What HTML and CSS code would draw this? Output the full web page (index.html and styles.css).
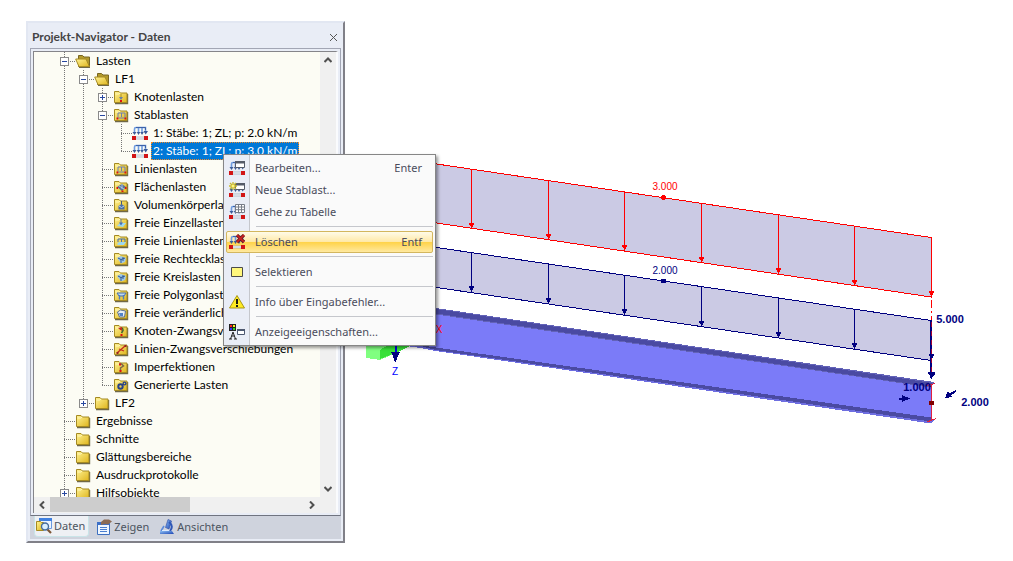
FILE: index.html
```html
<!DOCTYPE html>
<html lang="de">
<head>
    <meta charset="utf-8">
    <title>Projekt-Navigator</title>
    <link rel="stylesheet" href="styles.css">
</head>
<body>
    <svg class="sprite" aria-hidden="true">
        <defs>
            <linearGradient id="gold" x1="0" y1="0" x2="1" y2="1">
                <stop offset="0" stop-color="#fff394"/>
                <stop offset="1" stop-color="#dfb51d"/>
            </linearGradient>
            <linearGradient id="steel" x1="0" y1="0" x2="1" y2="1">
                <stop offset="0" stop-color="#8ec0f4"/>
                <stop offset="1" stop-color="#1c45b4"/>
            </linearGradient>
        </defs>
        <symbol id="folder" viewBox="0 0 16 16">
            <path d="M2 14.5h12.5V5" fill="none" stroke="#6f6848" stroke-width="1.4"/>
            <path d="M1.5 2.5h4.5l1.5 1.5h6.500v9.500H1.500z" fill="url(#gold)" stroke="#a58a22"/>
            <path d="M2.500 5h3.500l1-1" fill="none" stroke="#fff7b8"/>
        </symbol>
        <symbol id="folder-open" viewBox="0 0 16 16">
            <path d="M3.500 2.500h4l1.500 1.500h5.500v9.500h-11z" fill="#b39a2c" stroke="#786622"/>
            <path d="M.7 6h10.300l3.500 7.700H4z" fill="url(#gold)" stroke="#a58a22"/>
            <path d="M4 14.500h11" stroke="#6f6848"/>
        </symbol>
        <symbol id="load" viewBox="0 0 16 16">
            <path d="M2.500 8V4Q2.500 2.500 4 2.500h9.500V8M6.500 8V3M10 8V3" fill="none" stroke="#6f9ce0" stroke-width="1.600"/>
            <path d="M4 2.500h9.500V5" fill="none" stroke="#3d62a8"/>
            <path d="M.5 7h4L2.500 10zM4.800 7h3.500L6.500 10zM8.300 7h3.500L10 10zM11.500 6H16l-2.300 3.500z" fill="#3c5c98"/>
            <path d="M3 12h10v2H3z" fill="#f6f8fb" stroke="#8f9bb0" stroke-width=".6"/>
            <path d="M0 11h4v4H0zM12 11h4v4h-4z" fill="#d21515"/>
        </symbol>
        <symbol id="g-node" viewBox="0 0 16 16">
            <use href="#folder"/>
            <path d="M8 5v5" stroke="#a88c20"/><path d="M6 8h4l-2 3z" fill="#697fa8"/><path d="M7 11h2v2H7z" fill="#d11"/>
        </symbol>
        <symbol id="g-member" viewBox="0 0 16 16">
            <use href="#folder"/>
            <path d="M5 10V6h7v4M8.500 6v4M4 11h9" fill="none" stroke="#6d7fb0"/>
            <path d="M3.500 10.500h1.800v2H3.500zM11.500 10.500h1.800v2h-1.800z" fill="#d11"/>
        </symbol>
        <symbol id="g-area" viewBox="0 0 16 16">
            <use href="#folder"/>
            <path d="M4 8l5-3 4 3-4 4z" fill="#5a7196"/><path d="M6 7l5 3M9 5v5" stroke="#a6c6e8"/>
            <path d="M3.500 8h1.500v2H3.500zM8.500 11.500h2v1.500h-2zM12 8h1.500v2H12z" fill="#d11"/>
        </symbol>
        <symbol id="g-solid" viewBox="0 0 16 16">
            <use href="#folder"/>
            <path d="M8.500 4v5" stroke="#42597c"/><path d="M5.500 9l3-2 3 2v3.500h-6z" fill="#4c6ea5"/><path d="M6 9l2.500 1.500L11 9" fill="none" stroke="#b8d3f2"/>
        </symbol>
        <symbol id="g-point" viewBox="0 0 16 16">
            <use href="#folder"/>
            <path d="M4 11l3-3h6l-3 4z" fill="#9dd8f0"/><path d="M8 4v4" stroke="#5b77a8"/><path d="M6 7.500h4l-2 3z" fill="#456fb5"/>
        </symbol>
        <symbol id="g-line" viewBox="0 0 16 16">
            <use href="#folder"/>
            <path d="M4 11l2-2h7l-2 3H5z" fill="#9dd8f0"/><path d="M5 9V6h7v3M8.500 6v3" fill="none" stroke="#476eae"/>
        </symbol>
        <symbol id="g-rect" viewBox="0 0 16 16">
            <use href="#folder"/>
            <path d="M4 7l4-2 5 2-1 4-4 1.500z" fill="#9dc9e8"/><path d="M5 7l3 1.500L12 7M8 8v4M10 6v4" fill="none" stroke="#345891"/>
        </symbol>
        <symbol id="g-poly" viewBox="0 0 16 16">
            <use href="#folder"/>
            <path d="M4 6h9l-2 3H6z" fill="#bcd8ed" stroke="#476eae"/><path d="M6.500 8v4.500M10.500 8v4.500" stroke="#4f7dc0" stroke-width="1.400"/>
        </symbol>
        <symbol id="g-var" viewBox="0 0 16 16">
            <use href="#folder"/>
            <path d="M4.500 7l3-2 5 1-1 6h-5z" fill="#e8eef2" stroke="#5a7196"/><path d="M6 8h4v3H7z" fill="#5183c8"/>
        </symbol>
        <symbol id="g-forced" viewBox="0 0 16 16">
            <use href="#folder"/>
            <path d="M7 6.500q3-3 3 1L8.500 10" fill="none" stroke="#3e672f" stroke-width="1.500"/><path d="M5 5l4-1v4z" fill="#c9291d"/><path d="M7.500 11h2v2h-2z" fill="#d11"/>
        </symbol>
        <symbol id="g-forcedline" viewBox="0 0 16 16">
            <use href="#folder"/>
            <path d="M4 12l8-7M6 8l5 2" fill="none" stroke="#c42b1c" stroke-width="1.300"/><path d="M3.500 11h2v2h-2zM11.500 4h2v2h-2z" fill="#922"/>
        </symbol>
        <symbol id="g-imp" viewBox="0 0 16 16">
            <use href="#folder"/>
            <path d="M7.500 12V9l3-2-2-2H6" fill="none" stroke="#7b674a" stroke-width="1.500"/><path d="M6 4.500h2v2H6zM6.500 11h2v2h-2z" fill="#d11"/>
        </symbol>
        <symbol id="g-gen" viewBox="0 0 16 16">
            <use href="#folder"/>
            <circle cx="7.500" cy="9.500" r="2.200" fill="none" stroke="#294387" stroke-width="2"/><circle cx="11.500" cy="6.500" r="1.400" fill="none" stroke="#294387" stroke-width="1.400"/>
        </symbol>
        <symbol id="m-edit" viewBox="0 0 16 16">
            <use href="#load"/>
            <path d="M6.500 1.500h9v6h-9z" fill="#fff" stroke="#555b68"/><path d="M6 1h10v2.500H6z" fill="#555b68"/>
        </symbol>
        <symbol id="m-new" viewBox="0 0 16 16">
            <use href="#m-edit"/>
            <path d="M4 0v8M0 4h8M1 1l6 6M7 1L1 7" stroke="#c9b92c" stroke-width="1.300"/><circle cx="4" cy="4" r="1.500" fill="#fff584"/>
        </symbol>
        <symbol id="m-table" viewBox="0 0 16 16">
            <use href="#load"/>
            <path d="M6.500.5h9v8h-9z" fill="#fff"/><path d="M6.500.5h9v8h-9zM6.500 3h9M6.500 5.700h9M9.500.5v8M12.500.5v8" fill="none" stroke="#777d88"/>
        </symbol>
        <symbol id="m-delete" viewBox="0 0 16 16">
            <use href="#load"/>
            <path d="M8 1l7 7M15 1L8 8" stroke="#70191c" stroke-width="3.200"/><path d="M8 1l7 7M15 1L8 8" stroke="#cf2424" stroke-width="1.600"/>
        </symbol>
        <symbol id="m-select" viewBox="0 0 16 16">
            <path d="M2.500 3.500h11v9h-11z" fill="#fff77c" stroke="#4b4b4b"/>
        </symbol>
        <symbol id="m-warn" viewBox="0 0 16 16">
            <path d="M8 1.500L15.500 14H.5z" fill="#ffec21" stroke="#a99618" stroke-linejoin="round"/>
            <path d="M8 5v5M8 11v2" stroke="#111" stroke-width="1.900"/>
        </symbol>
        <symbol id="m-display" viewBox="0 0 16 16">
            <path d="M0 0h7v7H0z" fill="#222"/><path d="M1 1h2v2H1z" fill="#f22"/><path d="M4 1h2v2H4z" fill="#fe2"/><path d="M1 4h2v2H1z" fill="#33f"/><path d="M4 4h2v2H4z" fill="#2d2"/>
            <path d="M0 15h3M5 15h3M1.500 15L4 8l2.500 7M2.500 12h3" fill="none" stroke="#222"/>
            <path d="M8.500 5.500h7v5h-7z" fill="#fff" stroke="#4d5870"/><path d="M8 5h8v2H8z" fill="#4d5870"/>
        </symbol>
        <symbol id="t-data" viewBox="0 0 16 16">
            <path d="M3.500.5h12v10h-12z" fill="#edf5ff" stroke="#6a9be0"/><path d="M3 0h13v3H3z" fill="#3f7fe0"/>
            <path d="M.5 3.500h4l1 1h2v8h-7z" fill="url(#gold)" stroke="#a58a22"/>
            <path d="M11 11l4 4" stroke="#7c5535" stroke-width="2.200"/><circle cx="9" cy="8.500" r="3.500" fill="#d9efff" stroke="#456c9d" stroke-width="1.400"/>
        </symbol>
        <symbol id="t-show" viewBox="0 0 16 16">
            <path d="M1.500 3.500h12v12h-12z" fill="#f0f7ff" stroke="#3d6fc0"/><path d="M1 3h13v3H1z" fill="#3d70c8"/>
            <path d="M4 8.500h7M4 10.500h7M4 12.500h7" stroke="#4b7fd1"/><path d="M5 3l3-2.500h5l3 2-4 3-3-.5-4 1z" fill="#8b6b55"/>
        </symbol>
        <symbol id="t-views" viewBox="0 0 16 16">
            <path d="M9 .5l3.500 1.500L10 10 6.500 8.500z" fill="url(#steel)" stroke="#2848a4" stroke-width=".6"/>
            <path d="M10 3q5 4 1 9" fill="none" stroke="#2e58b8" stroke-width="2"/>
            <path d="M5 7L2 12" stroke="#5c8bdc" stroke-width="1.600"/>
            <path d="M1 12h12l2 3H1z" fill="url(#steel)"/><path d="M3 11.500h7" stroke="#dcebff"/>
        </symbol>
    </svg>

    <div class="workspace">
        <aside class="navigator">
            <header class="titlebar">
                <h1>Projekt-Navigator - Daten</h1>
                <button class="close" aria-label="Schließen">
                    <svg viewBox="0 0 9 9"><path d="M1 1l7 7M8 1L1 8"/></svg>
                </button>
            </header>

            <div class="frame">
                <div class="pane">
                    <ul class="tree">
                        <li>
                            <div class="row"><button class="toggle open" aria-label="Lasten"></button><svg class="icon"><use href="#folder-open"/></svg><span>Lasten</span></div>
                            <ul>
                                <li>
                                    <div class="row"><button class="toggle open" aria-label="LF1"></button><svg class="icon"><use href="#folder-open"/></svg><span>LF1</span></div>
                                    <ul>
                                        <li><div class="row"><button class="toggle" aria-label="Knotenlasten"></button><svg class="icon"><use href="#g-node"/></svg><span>Knotenlasten</span></div></li>
                                        <li>
                                            <div class="row"><button class="toggle open" aria-label="Stablasten"></button><svg class="icon"><use href="#g-member"/></svg><span>Stablasten</span></div>
                                            <ul>
                                                <li><div class="row"><svg class="icon"><use href="#load"/></svg><span>1: Stäbe: 1; ZL; p: 2.0 kN/m</span></div></li>
                                                <li><div class="row"><svg class="icon"><use href="#load"/></svg><span class="selected">2: Stäbe: 1; ZL; p: 3.0 kN/m</span></div></li>
                                            </ul>
                                        </li>
                                        <li><div class="row"><svg class="icon"><use href="#g-member"/></svg><span>Linienlasten</span></div></li>
                                        <li><div class="row"><svg class="icon"><use href="#g-area"/></svg><span>Flächenlasten</span></div></li>
                                        <li><div class="row"><svg class="icon"><use href="#g-solid"/></svg><span>Volumenkörperlasten</span></div></li>
                                        <li><div class="row"><svg class="icon"><use href="#g-point"/></svg><span>Freie Einzellasten</span></div></li>
                                        <li><div class="row"><svg class="icon"><use href="#g-line"/></svg><span>Freie Linienlasten</span></div></li>
                                        <li><div class="row"><svg class="icon"><use href="#g-rect"/></svg><span>Freie Rechtecklasten</span></div></li>
                                        <li><div class="row"><svg class="icon"><use href="#g-rect"/></svg><span>Freie Kreislasten</span></div></li>
                                        <li><div class="row"><svg class="icon"><use href="#g-poly"/></svg><span>Freie Polygonlasten</span></div></li>
                                        <li><div class="row"><svg class="icon"><use href="#g-var"/></svg><span>Freie veränderliche Lasten</span></div></li>
                                        <li><div class="row"><svg class="icon"><use href="#g-forced"/></svg><span>Knoten-Zwangsverschiebungen</span></div></li>
                                        <li><div class="row"><svg class="icon"><use href="#g-forcedline"/></svg><span>Linien-Zwangsverschiebungen</span></div></li>
                                        <li><div class="row"><svg class="icon"><use href="#g-imp"/></svg><span>Imperfektionen</span></div></li>
                                        <li><div class="row"><svg class="icon"><use href="#g-gen"/></svg><span>Generierte Lasten</span></div></li>
                                    </ul>
                                </li>
                                <li><div class="row"><button class="toggle" aria-label="LF2"></button><svg class="icon"><use href="#folder"/></svg><span>LF2</span></div></li>
                            </ul>
                        </li>
                        <li><div class="row"><svg class="icon"><use href="#folder"/></svg><span>Ergebnisse</span></div></li>
                        <li><div class="row"><svg class="icon"><use href="#folder"/></svg><span>Schnitte</span></div></li>
                        <li><div class="row"><svg class="icon"><use href="#folder"/></svg><span>Glättungsbereiche</span></div></li>
                        <li><div class="row"><svg class="icon"><use href="#folder"/></svg><span>Ausdruckprotokolle</span></div></li>
                        <li><div class="row"><button class="toggle" aria-label="Hilfsobjekte"></button><svg class="icon"><use href="#folder"/></svg><span>Hilfsobjekte</span></div></li>
                    </ul>
                    <div class="scroll-v">
                        <button aria-label="Nach oben"><svg viewBox="0 0 8 8"><path d="M.5 6L4 2.500 7.500 6"/></svg></button>
                        <button aria-label="Nach unten"><svg viewBox="0 0 8 8"><path d="M.5 2L4 5.500 7.500 2"/></svg></button>
                    </div>
                    <div class="scroll-h">
                        <button aria-label="Nach links"><svg viewBox="0 0 8 8"><path d="M6 .5L2.500 4 6 7.500"/></svg></button>
                        <div class="track"><div class="thumb"></div></div>
                        <button aria-label="Nach rechts"><svg viewBox="0 0 8 8"><path d="M2 .5L5.500 4 2 7.500"/></svg></button>
                    </div>
                </div>
            </div>

            <nav class="tabs">
                <button class="tab active"><svg class="icon"><use href="#t-data"/></svg>Daten</button>
                <button class="tab"><svg class="icon"><use href="#t-show"/></svg>Zeigen</button>
                <button class="tab"><svg class="icon"><use href="#t-views"/></svg>Ansichten</button>
            </nav>
        </aside>

        <svg class="model" viewBox="345 0 668 561">
            <defs>
                <path id="head" d="M-2.500-6h5v2h-1L.5 0h-1l-1-4h-1z"/>
            </defs>

            <!-- support -->
            <path d="M366 340v18l14 2 16-7v-13z" fill="#80ff80"/>
            <path d="M380 350l10-6h24l-14 7-20 8z" fill="#38e038"/>
            <path d="M395.500 340v14" stroke="#0000e0" stroke-width="2"/>
            <path d="M391 352h9l-2 4-2 6h-1l-2-6z" fill="#000080"/>

            <!-- beam -->
            <path d="M400 304l531 78v40L400 345z" fill="#7b7bf8"/>
            <path d="M400 303l36 5 498 74-4 5.500-494-73-36-5z" fill="#6262b8"/>
            <path d="M400 304l36 5 496 74v4L436 313.500l-36-5z" fill="#4a4aa2"/>
            <path d="M415 344.500l21 3 495 71 4 1-4 4-495-72.500-21-4z" fill="#6e6ee0"/>
            <path d="M415 344.500l21 3 495 70v4l-495-71.500z" fill="#4a4aa2"/>

            <!-- load 3.0 -->
            <path d="M430 163l501 74v60l-501-75z" fill="#cbcae4"/>
            <g class="red">
                <path d="M430 163l501 74.500V297l-501-75M471.500 169v60M548.500 180v60M624.500 192v60M701.500 203v60M778.500 214v60M854.500 226v60"/>
                <circle cx="663.500" cy="197.500" r="2"/>
                <use href="#head" x="471.500" y="228.500"/><use href="#head" x="548.500" y="239.500"/><use href="#head" x="624.500" y="250.500"/><use href="#head" x="701.500" y="262.500"/><use href="#head" x="778.500" y="274"/><use href="#head" x="854.500" y="285.500"/><use href="#head" x="931.500" y="297"/>
            </g>

            <!-- load 2.0 -->
            <path d="M430 246l501 74v40l-501-74z" fill="#cbcae4"/>
            <g class="navy">
                <path d="M430 246.500l501 74v40l-501-74M471.500 252v40M548.500 264v40M624.500 275v40M701.500 286v40M778.500 298v40M854.500 309v40"/>
                <path d="M661.500 279.500h4v3h-4z"/>
                <use href="#head" x="471.500" y="292"/><use href="#head" x="548.500" y="304"/><use href="#head" x="624.500" y="315"/><use href="#head" x="701.500" y="326.500"/><use href="#head" x="778.500" y="338"/><use href="#head" x="854.500" y="349"/><use href="#head" x="931.500" y="360"/>
            </g>

            <!-- nodal loads and member end -->
            <path d="M931 320v56" stroke="#000080" stroke-width="2"/>
            <path d="M931.500 300v20" stroke="#f00" stroke-dasharray="8 3 2 3"/>
            <path d="M931.500 322v52" stroke="#a00030" stroke-dasharray="5 4"/>
            <path d="M928 372h7v2l-2 2-1 3h-1l-1-3-2-2z" fill="#000080"/>
            <path d="M931.500 384v36M926 385.500l9-2M927 422l9-3.500M929 388l4-4" fill="none" stroke="#e02040"/>
            <path d="M929 401h5v4h-5z" fill="#800000"/>
            <path d="M899 398.500h5" stroke="#000080" stroke-width="2"/>
            <path d="M902 395l8 3.500-8 3.500z" fill="#000080"/>
            <path d="M956 391l-6 3.500" fill="none" stroke="#000080" stroke-width="2"/>
            <path d="M948 391l4 6-7 1z" fill="#000080"/>

            <g class="values">
                <text x="665" y="190" fill="#f00">3.000</text>
                <text x="665" y="274" fill="#000080">2.000</text>
                <text x="395" y="375" fill="#00f">Z</text>
                <text x="439" y="333" fill="#f00">X</text>
            </g>
            <g class="forces">
                <text x="950" y="323">5.000</text>
                <text x="917" y="391">1.000</text>
                <text x="975" y="406">2.000</text>
            </g>
        </svg>

        <ul class="context-menu">
            <li><button><svg class="icon"><use href="#m-edit"/></svg>Bearbeiten...<kbd>Enter</kbd></button></li>
            <li><button><svg class="icon"><use href="#m-new"/></svg>Neue Stablast...</button></li>
            <li><button><svg class="icon"><use href="#m-table"/></svg>Gehe zu Tabelle</button></li>
            <li class="separator"></li>
            <li><button class="hover"><svg class="icon"><use href="#m-delete"/></svg>Löschen<kbd>Entf</kbd></button></li>
            <li class="separator"></li>
            <li><button><svg class="icon"><use href="#m-select"/></svg>Selektieren</button></li>
            <li class="separator"></li>
            <li><button><svg class="icon"><use href="#m-warn"/></svg>Info über Eingabefehler...</button></li>
            <li class="separator"></li>
            <li><button><svg class="icon"><use href="#m-display"/></svg>Anzeigeeigenschaften...</button></li>
        </ul>
    </div>
</body>
</html>
```

FILE: styles.css
```css
* {
    box-sizing: border-box;
}

body {
    margin: 0;
    background: #fff;
    font: 11px/18px "Noto Sans", "Open Sans", sans-serif;
    color: #000;
}

ul {
    list-style: none;
    margin: 0;
    padding: 0;
}

button {
    margin: 0;
    padding: 0;
    border: 0;
    background: none;
    font: inherit;
    color: inherit;
}

.sprite {
    position: absolute;
    width: 0;
    height: 0;
}

.icon {
    flex: none;
    width: 16px;
    height: 16px;
}

.workspace {
    position: relative;
    display: flex;
    align-items: flex-start;
    min-height: 100vh;
    padding-left: 26px;
}

/* Navigator window */
.navigator {
    display: flex;
    flex-direction: column;
    flex: none;
    width: 319px;
    height: calc(100vh - 39px);
    margin: 21px 0 18px;
    padding: 0 2px 2px;
    background: #e9edf6;
    border: 2px solid #808088;
    border-top-color: #e2e7f2;
    border-left-color: #e2e7f2;
}

.titlebar {
    display: flex;
    align-items: center;
    justify-content: space-between;
    height: 25px;
    padding: 3px 3px 0 2px;
}

.titlebar h1 {
    margin: 0;
    font: bold 12px/18px Lato, "Open Sans", sans-serif;
    color: #444;
}

.close {
    display: flex;
}

.close svg {
    width: 9px;
    height: 9px;
    fill: none;
    stroke: #555;
}

.frame {
    flex: 1;
    min-height: 0;
    padding: 2px;
    border: 1px solid #a2a6b4;
    border-bottom-color: #707480;
}

.pane {
    display: grid;
    grid-template: minmax(0, 1fr) 16px / minmax(0, 1fr) 16px;
    height: 100%;
    background: #f0f0f0;
    border-top: 1px solid #85858a;
    border-left: 1px solid #85858a;
    border-right: 2px solid #fafbfd;
}

/* Tree */
.tree {
    padding-left: 26px;
    overflow: hidden;
    white-space: nowrap;
    background: #fcfcf4;
    font: 12px/18px Lato, "Open Sans", sans-serif;
}

.tree ul {
    padding-left: 19px;
}

.tree li {
    background: repeating-linear-gradient(#777 0 1px, transparent 1px 2px) 4px 0 / 1px 100% no-repeat;
}

.tree li:last-child {
    background-size: 1px 9px;
}

.row {
    display: flex;
    align-items: center;
    height: 18px;
    background: repeating-linear-gradient(90deg, #777 0 1px, transparent 1px 2px) 4px 9px / 12px 1px no-repeat;
}

.row .icon {
    margin: 0 4px 0 15px;
}

.toggle {
    width: 9px;
    height: 9px;
    border: 1px solid #8a8a8a;
    background:
        linear-gradient(#2848a0, #2848a0) center / 5px 1px no-repeat,
        linear-gradient(#2848a0, #2848a0) center / 1px 5px no-repeat,
        #fff;
}

.toggle.open {
    background: linear-gradient(#2848a0, #2848a0) center / 5px 1px no-repeat, #fff;
}

.row .toggle + .icon {
    margin-left: 6px;
}

.row span {
    padding: 0 1px;
}

.row .selected {
    margin-left: -1px;
    padding: 0 2px;
    background: #0078d7;
    color: #fff;
    outline: 1px dotted #f08a28;
    outline-offset: -1px;
}

/* Scrollbars */
.scroll-v {
    display: flex;
    flex-direction: column;
    justify-content: space-between;
}

.scroll-h {
    display: flex;
    padding-bottom: 1px;
}

.scroll-v button,
.scroll-h button {
    display: flex;
    align-items: center;
    justify-content: center;
    width: 16px;
    height: 16px;
}

.scroll-v svg,
.scroll-h svg {
    width: 8px;
    height: 8px;
    fill: none;
    stroke: #505050;
    stroke-width: 2;
}

.track {
    flex: 1;
}

.thumb {
    width: 55%;
    height: 100%;
    background: #cdcdcd;
}

/* Tabs */
.tabs {
    display: flex;
    gap: 6px;
    height: 23px;
    padding: 0 4px 2px;
    background: #cfd3dd;
    color: #4c5460;
}

.tab {
    display: flex;
    align-items: center;
    gap: 2px;
    padding: 0 3px 0 1px;
}

.tab.active {
    background: #eef0f4;
    border: 1px solid #c9e4e8;
    border-top: 0;
    border-radius: 0 0 4px 4px;
}

/* Model view */
.model {
    flex: 1;
    min-width: 0;
    shape-rendering: crispEdges;
}

.red {
    fill: #f00;
    stroke: #f00;
}

.navy {
    fill: #000080;
    stroke: #000080;
}

.red > path:first-child,
.navy > path:first-child {
    fill: none;
}

.red use,
.navy use {
    stroke: none;
}

.values {
    font: 10px "Liberation Sans", sans-serif;
    text-anchor: middle;
}

.forces {
    font: bold 11px "Liberation Sans", sans-serif;
    fill: #000080;
    text-anchor: middle;
}

/* Context menu */
.context-menu {
    position: absolute;
    left: 223px;
    top: 154px;
    width: 213px;
    padding: 2px;
    border: 1px solid #868686;
    background: linear-gradient(90deg, #e9edf6 25px, #c5c7cc 25px 26px, #fafafa 26px);
    box-shadow: 2px 2px 3px rgba(0, 0, 0, 0.4);
    color: #4a4c5c;
}

.context-menu button {
    display: flex;
    align-items: center;
    width: 100%;
    height: 22px;
    padding: 0 11px 0 3px;
    text-align: left;
}

.context-menu .icon {
    margin-right: 10px;
}

.context-menu kbd {
    margin-left: auto;
    font: inherit;
}

.context-menu .hover {
    border: 1px solid #d3b65e;
    border-radius: 2px;
    padding: 0 10px 0 2px;
    background: linear-gradient(#fffbe8, #ffe9a8 48%, #ffd34a 52%, #ffe9a0);
}

.separator {
    height: 8px;
    margin-left: 30px;
    background: linear-gradient(#c5c7cc, #c5c7cc) 0 3px / 100% 1px no-repeat;
}
```
